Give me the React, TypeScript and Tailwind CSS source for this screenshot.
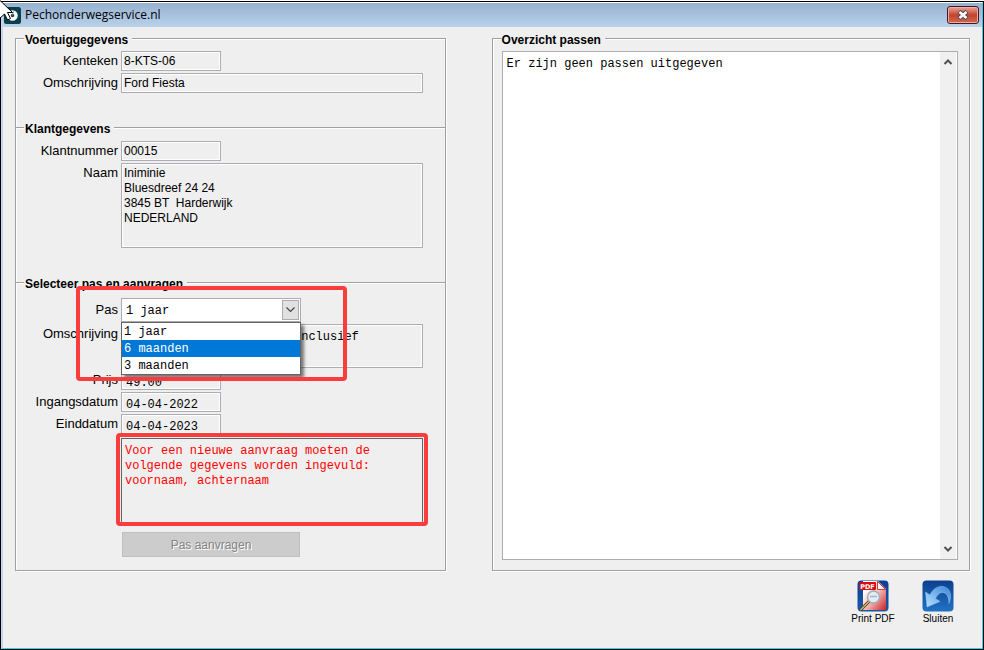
import React, { useState } from "react";
import clsx from "clsx";

const SANS = "font-['Liberation_Sans',Arial,sans-serif] text-[12px]";
const MONO = "font-['Liberation_Mono','Courier_New',monospace] text-[12px]";
const BOX =
  "block border border-[#abadb3] bg-[#efefef] text-black shadow-[inset_1px_1px_0_#fff,inset_-1px_-1px_0_#fff] outline-none resize-none overflow-hidden leading-[15px]";

const OPTIONS = ["1 jaar", "6 maanden", "3 maanden"];

const Group = ({
  title,
  className,
  children,
}: {
  title: string;
  className?: string;
  children: React.ReactNode;
}) => (
  <fieldset
    className={clsx(
      "min-w-0 border border-[#a0a0a0] shadow-[1px_1px_0_#fff,inset_1px_1px_0_#fff]",
      className
    )}
  >
    <legend className="ml-2 bg-[#efefef] pt-1 pl-px pr-1 text-[12px] leading-[17px] font-bold">
      {title}
    </legend>
    {children}
  </fieldset>
);

const Row = ({
  id,
  label,
  tall,
  children,
}: {
  id: string;
  label: string;
  tall?: boolean;
  children: React.ReactNode;
}) => (
  <div className="grid grid-cols-[102px_1fr] gap-x-[3px]">
    <label
      htmlFor={id}
      className={clsx("text-right text-[13px]", tall ? "leading-6" : "leading-5")}
    >
      {label}
    </label>
    {children}
  </div>
);

const Field = ({
  id,
  value,
  mono,
  wide,
}: {
  id: string;
  value: string;
  mono?: boolean;
  wide?: boolean;
}) => (
  <input
    id={id}
    readOnly
    value={value}
    className={clsx(
      BOX,
      "h-5",
      wide ? "w-full" : "w-[100px]",
      mono ? [MONO, "pt-[5px] pl-1"] : [SANS, "pl-[2px]"]
    )}
  />
);

const Chevron = ({ up }: { up?: boolean }) => (
  <svg width="10" height="8" viewBox="0 0 10 8" fill="none">
    <path
      d={up ? "M1.5 6 5 2.5 8.5 6" : "M1.5 2 5 5.5 8.5 2"}
      stroke="#505050"
      strokeWidth="2"
    />
  </svg>
);

const Pointer = () => (
  <svg width="14" height="21" viewBox="0 0 14 21" className="absolute top-0 left-0 z-20">
    <path
      d="M-1 -0.500 12.500 12.500 H7.500 L10.500 18.500 7.500 20 4.500 14 -1 19Z"
      fill="#fff"
      stroke="#000"
      strokeWidth="1"
    />
  </svg>
);

const AppIcon = () => (
  <svg width="17" height="17" viewBox="0 0 17 17">
    <rect width="17" height="17" rx="2.5" fill="#0b3f4c" />
    <circle cx="8.5" cy="8.5" r="3.5" fill="none" stroke="#fff" strokeWidth="3.500" />
    <path d="M8 8.5 9.500 4.500" stroke="#6d8f97" strokeWidth="1" />
  </svg>
);

const PdfIcon = () => (
  <svg width="32" height="32" viewBox="0 0 32 32">
    <defs>
      <linearGradient id="blue" x1="0" y1="0" x2="0" y2="1">
        <stop offset="0" stopColor="#0b3f94" />
        <stop offset="1" stopColor="#1c5aa8" />
      </linearGradient>
      <linearGradient id="page" x1="0" y1="0" x2="1" y2="1">
        <stop offset="0.2" stopColor="#fff" />
        <stop offset="0.5" stopColor="#f3c4c4" />
        <stop offset="1" stopColor="#cf2222" />
      </linearGradient>
    </defs>
    <rect x="0.5" y="0.5" width="31" height="31" rx="4" fill="url(#blue)" />
    <path d="M6 1 H21 L29 9 V30 H6Z" fill="url(#page)" />
    <path d="M20.500 1.500 28.500 9.500 H20.500Z" fill="#fff" stroke="#d33" strokeWidth="1" />
    <rect x="2.500" y="2" width="16.500" height="8" rx="1" fill="#d90d0d" />
    <text
      x="10.5"
      y="8.5"
      textAnchor="middle"
      fontSize="6.5"
      fontWeight="bold"
      fill="#fff"
      fontFamily="DejaVu Sans, sans-serif"
    >
      PDF
    </text>
    <path d="M12 21.500 3.500 30" stroke="#4a3510" strokeWidth="3" />
    <path d="M12 21.500 3.500 30" stroke="#d9b86a" strokeWidth="1.5" />
    <circle cx="16.500" cy="17" r="6" fill="#e3ebf3" stroke="#a3abb5" strokeWidth="1.5" />
    <path d="M13 16.500h7" stroke="#a9b4c0" strokeWidth="1.5" />
  </svg>
);

const BackIcon = () => (
  <svg width="32" height="32" viewBox="0 0 32 32">
    <defs>
      <linearGradient id="back" x1="0" y1="0" x2="0" y2="1">
        <stop offset="0" stopColor="#0d3f8e" />
        <stop offset="1" stopColor="#2272c4" />
      </linearGradient>
      <linearGradient id="arrow" x1="1" y1="0" x2="0" y2="1">
        <stop offset="0" stopColor="#3b86d8" />
        <stop offset="1" stopColor="#b5e2ff" />
      </linearGradient>
    </defs>
    <rect x="0.5" y="0.5" width="31" height="31" rx="4" fill="url(#back)" />
    <path
      d="M3.500 12 8 15 C11 8.500 16 6 21 6.500 C28 7.500 30.500 15 27 23.500 C27 17 24.500 12.500 20.500 12.500 C17.500 12.500 15 15.500 13.500 18.500 L18 21.500 5 27Z"
      fill="url(#arrow)"
      stroke="#8cc8f5"
      strokeWidth="0.5"
    />
  </svg>
);

const TitleBar = () => (
  <header className="flex h-6 items-center bg-linear-to-b from-[#97b2d0] to-[#b9d2eb] pl-px">
    <AppIcon />
    <h1 className="flex-1 pl-1 font-['Open_Sans',sans-serif] text-[12px] leading-6">
      Pechonderwegservice.nl
    </h1>
    <button
      aria-label="Venster sluiten"
      className="mr-[3px] flex h-[18px] w-8 items-center justify-center rounded-[3px] border border-[#4b1420] bg-linear-to-b from-[#e5a596] via-[#c4422c] to-[#d0694f] shadow-[inset_0_0_0_1px_#e8b0a4]"
    >
      <svg width="12" height="10" viewBox="0 0 12 10">
        <path d="M2 1.500 10 8.500M10 1.500 2 8.500" stroke="#4a4a5c" strokeWidth="4.500" />
        <path d="M2.500 2 9.500 8M9.500 2 2.500 8" stroke="#fff" strokeWidth="2.500" />
      </svg>
    </button>
  </header>
);

const PassSelect = () => {
  const [pass, setPass] = useState("1 jaar");
  const [active, setActive] = useState("6 maanden");

  return (
    <div className="relative w-[180px]">
      <select
        id="pas"
        value={pass}
        onChange={(e) => setPass(e.target.value)}
        className={clsx(
          MONO,
          "block h-6 w-full appearance-none border border-[#abadb3] bg-white pt-px pl-1 outline-none"
        )}
      >
        {OPTIONS.map((o) => (
          <option key={o}>{o}</option>
        ))}
      </select>
      <span className="pointer-events-none absolute top-[2px] right-[2px] flex h-5 w-[17px] items-center justify-center border border-[#abadb3] bg-[#e1e1e1]">
        <svg width="9" height="6" viewBox="0 0 9 6" fill="none">
          <path d="M0.500 0.500 4.500 4.500 8.500 0.500" stroke="#444" strokeWidth="1.200" />
        </svg>
      </span>
      <ul
        role="listbox"
        aria-label="Pas"
        className={clsx(
          MONO,
          "absolute top-full left-0 z-10 w-full border border-[#646464] bg-white shadow-[3px_3px_3px_rgba(0,0,0,0.5)]"
        )}
      >
        {OPTIONS.map((o) => (
          <li
            key={o}
            role="option"
            aria-selected={o === active}
            onMouseEnter={() => setActive(o)}
            onClick={() => setPass(o)}
            className={clsx(
              "h-[17px] pl-[2px] leading-[19px]",
              o === active && "bg-[#0078d7] text-white"
            )}
          >
            {o}
          </li>
        ))}
      </ul>
      <div className="pointer-events-none absolute -top-3 -right-[46px] -left-[45px] z-20 h-[95px] rounded-[4px] border-4 border-[#f93c3c]" />
    </div>
  );
};

const App = () => (
  <div className="min-h-screen bg-white pt-px">
    <Pointer />
    <div className="flex min-h-[calc(100vh-1px)] flex-col border border-black">
      <main
        className={clsx(
          SANS,
          "flex flex-1 flex-col border-t border-r border-b border-l-2 border-t-white border-r-[#2fd0f0] border-b-[#2fd0f0] border-l-[#c4d9f1] bg-[#efefef] text-black"
        )}
      >
        <TitleBar />
        <div className="grid grid-cols-[9fr_10fr] gap-[46px] px-3 pt-px">
          <div className="flex flex-col">
            <Group title="Voertuiggegevens" className="-mb-[11px] h-[100px]">
              <div className="flex flex-col gap-[2px] pt-[2px] pr-[22px]">
                <Row id="kenteken" label="Kenteken">
                  <Field id="kenteken" value="8-KTS-06" />
                </Row>
                <Row id="auto" label="Omschrijving">
                  <Field id="auto" value="Ford Fiesta" wide />
                </Row>
              </div>
            </Group>
            <Group title="Klantgegevens" className="-mb-[11px] h-[166px]">
              <div className="flex flex-col gap-[2px] pt-[3px] pr-[22px]">
                <Row id="klant" label="Klantnummer">
                  <Field id="klant" value="00015" />
                </Row>
                <Row id="naam" label="Naam">
                  <textarea
                    id="naam"
                    readOnly
                    value={"Iniminie\nBluesdreef 24 24\n3845 BT  Harderwijk\nNEDERLAND"}
                    className={clsx(BOX, SANS, "h-[85px] w-full pt-[2px] pl-[2px]")}
                  />
                </Row>
              </div>
            </Group>
            <Group title="Selecteer pas en aanvragen" className="pb-[13px]">
              <div className="flex flex-col gap-[2px] pt-[5px] pr-[22px]">
                <Row id="pas" label="Pas" tall>
                  <PassSelect />
                </Row>
                <Row id="omschrijving" label="Omschrijving">
                  <textarea
                    id="omschrijving"
                    readOnly
                    value="inclusief"
                    className={clsx(BOX, MONO, "h-11 w-full pt-[5px] pl-1 indent-[168px]")}
                  />
                </Row>
                <Row id="prijs" label="Prijs">
                  <Field id="prijs" value="49.00" mono />
                </Row>
                <Row id="ingang" label="Ingangsdatum">
                  <Field id="ingang" value="04-04-2022" mono />
                </Row>
                <Row id="eind" label="Einddatum">
                  <Field id="eind" value="04-04-2023" mono />
                </Row>
                <div className="relative mt-[2px] ml-[105px]">
                  <textarea
                    aria-label="Melding"
                    readOnly
                    value="Voor een nieuwe aanvraag moeten de volgende gegevens worden ingevuld: voornaam, achternaam"
                    className={clsx(
                      MONO,
                      "block h-[85px] w-full resize-none overflow-hidden border border-[#646464] bg-[#efefef] pt-[5px] pl-[3px] leading-[15px] text-[#ff0000] outline-none"
                    )}
                  />
                  <div className="pointer-events-none absolute -inset-x-[5px] -top-[5px] -bottom-[3px] z-20 rounded-[4px] border-4 border-[#f93c3c]" />
                </div>
                <button
                  disabled
                  className="mt-[7px] ml-[106px] h-[25px] w-[178px] border border-[#bfbfbf] bg-[#cccccc] text-[12px] text-[#838383] text-shadow-[1px_1px_0_#fff]"
                >
                  Pas aanvragen
                </button>
              </div>
            </Group>
          </div>
          <Group title="Overzicht passen" className="flex flex-col">
            <div className="mt-[2px] mr-[11px] mb-[10px] ml-[9px] flex flex-1 border border-[#abadb3] bg-white pr-px">
              <textarea
                aria-label="Overzicht passen"
                readOnly
                value="Er zijn geen passen uitgegeven"
                className={clsx(
                  MONO,
                  "min-w-0 flex-1 resize-none pt-[5px] pl-1 leading-[15px] outline-none"
                )}
              />
              <div className="flex w-4 flex-col items-center justify-between bg-[#f0f0f0] py-[6px]">
                <Chevron up />
                <Chevron />
              </div>
            </div>
          </Group>
        </div>
        <footer className="flex justify-end gap-[21px] pt-[9px] pr-[22px]">
          <button className="flex w-11 flex-col items-center text-[10px] leading-[14px] whitespace-nowrap">
            <PdfIcon />
            Print PDF
          </button>
          <button className="flex w-11 flex-col items-center text-[10px] leading-[14px]">
            <BackIcon />
            Sluiten
          </button>
        </footer>
      </main>
    </div>
  </div>
);
export default App;
